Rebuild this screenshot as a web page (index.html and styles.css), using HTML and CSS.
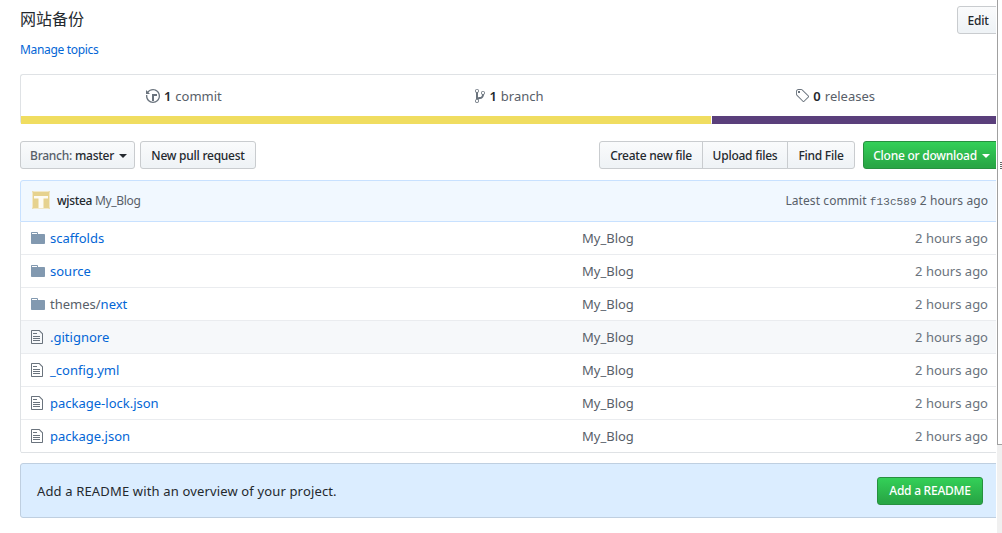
FILE: index.html
```html
<!DOCTYPE html>
<html>

<head>
    <meta charset="utf-8">
    <link rel="stylesheet" href="styles.css">
</head>

<body>

    <div class="page">
        <div class="content">

            <div class="head">
                <div>
                    <div class="description">网站备份</div>
                    <a class="topics">Manage topics</a>
                </div>
                <button class="btn btn-edit">Edit</button>
            </div>

            <div class="summary">
                <div class="stats">
                    <div class="stat">
                        <svg class="icon" width="14" height="16" viewBox="0 0 14 16"><path d="M8 13H6V6h5v2H8v5zM7 1C4.81 1 2.87 2.02 1.59 3.59L0 2v4h4L2.5 4.5C3.55 3.17 5.17 2.3 7 2.3c3.14 0 5.7 2.56 5.7 5.7s-2.56 5.7-5.7 5.7A5.71 5.71 0 0 1 1.3 8c0-.34.03-.67.09-1H.08C.03 7.33 0 7.66 0 8c0 3.86 3.14 7 7 7s7-3.14 7-7-3.14-7-7-7z"/></svg>
                        <b>1</b> commit
                    </div>
                    <div class="stat">
                        <svg class="icon" width="10" height="16" viewBox="0 0 10 16"><path d="M10 5c0-1.11-.89-2-2-2a1.993 1.993 0 0 0-1 3.72v.3c-.02.52-.23.98-.63 1.38-.4.4-.86.61-1.38.63-.83.02-1.48.16-2 .45V4.72a1.993 1.993 0 0 0-1-3.72C.88 1 0 1.89 0 3a2 2 0 0 0 1 1.72v6.56c-.59.35-1 .99-1 1.72 0 1.11.89 2 2 2 1.11 0 2-.89 2-2 0-.53-.2-1-.53-1.36.09-.06.48-.41.59-.47.25-.11.56-.17.94-.17 1.05-.05 1.95-.45 2.75-1.25S8.95 7.77 9 6.73h-.02C9.59 6.37 10 5.73 10 5zM2 1.8c.66 0 1.2.55 1.2 1.2 0 .65-.55 1.2-1.2 1.2C1.35 4.2.8 3.65.8 3c0-.65.55-1.2 1.2-1.2zm0 12.41c-.66 0-1.2-.55-1.2-1.2 0-.65.55-1.2 1.2-1.2.65 0 1.2.55 1.2 1.2 0 .65-.55 1.2-1.2 1.2zm6-8c-.66 0-1.2-.55-1.2-1.2 0-.65.55-1.2 1.2-1.2.65 0 1.2.55 1.2 1.2 0 .65-.55 1.2-1.2 1.2z"/></svg>
                        <b>1</b> branch
                    </div>
                    <div class="stat">
                        <svg class="icon" width="14" height="16" viewBox="0 0 14 16"><path d="M7.73 1.73C7.26 1.26 6.62 1 5.96 1H3.5C2.13 1 1 2.13 1 3.5v2.47c0 .66.27 1.3.73 1.77l6.06 6.06c.39.39 1.02.39 1.41 0l4.59-4.59a.996.996 0 0 0 0-1.41L7.73 1.73zM2.38 7.09c-.31-.3-.47-.7-.47-1.13V3.5c0-.88.72-1.59 1.59-1.59h2.47c.42 0 .83.16 1.13.47l6.14 6.13-4.73 4.73-6.13-6.15zM3.01 3h2v2H3V3h.01z"/></svg>
                        <b>0</b> releases
                    </div>
                </div>
                <div class="langbar">
                    <span class="lang-yellow"></span>
                    <span class="lang-purple"></span>
                </div>
            </div>

            <div class="toolbar">
                <button class="btn btn-branch"><span class="muted">Branch:</span> master <i class="caret"></i></button>
                <button class="btn btn-pull">New pull request</button>
                <div class="spacer"></div>
                <div class="btn-group">
                    <button class="btn btn-create">Create new file</button>
                    <button class="btn btn-upload">Upload files</button>
                    <button class="btn btn-find">Find File</button>
                </div>
                <button class="btn btn-green btn-clone">Clone or download <i class="caret"></i></button>
            </div>

            <div class="commit">
                <svg class="avatar" width="18" height="18" viewBox="0 0 18 18"><rect width="18" height="18" rx="1" fill="#e6d28f"/><path d="M2 5h14v2.500H2zM6.500 7.500h5V18h-5z" fill="#fff" opacity="0.9"/><rect x="0.500" y="0.500" width="17" height="17" rx="1" fill="none" stroke="#f2e8c8"/></svg>
                <b class="author">wjstea</b>
                <span class="commit-msg">My_Blog</span>
                <div class="spacer"></div>
                <span class="commit-info">Latest commit <code>f13c589</code> 2 hours ago</span>
            </div>

            <div class="files">
                <div class="row">
                    <svg class="folder" width="14" height="16" viewBox="0 0 14 16"><path d="M13 4H7V3c0-.66-.31-1-1-1H1c-.55 0-1 .45-1 1v10c0 .55.45 1 1 1h12c.55 0 1-.45 1-1V5c0-.55-.45-1-1-1zM6 4H1V3h5v1z"/></svg>
                    <span class="name"><a>scaffolds</a></span><span class="msg">My_Blog</span><span class="age">2 hours ago</span>
                </div>
                <div class="row">
                    <svg class="folder" width="14" height="16" viewBox="0 0 14 16"><path d="M13 4H7V3c0-.66-.31-1-1-1H1c-.55 0-1 .45-1 1v10c0 .55.45 1 1 1h12c.55 0 1-.45 1-1V5c0-.55-.45-1-1-1zM6 4H1V3h5v1z"/></svg>
                    <span class="name"><a>source</a></span><span class="msg">My_Blog</span><span class="age">2 hours ago</span>
                </div>
                <div class="row">
                    <svg class="folder" width="14" height="16" viewBox="0 0 14 16"><path d="M13 4H7V3c0-.66-.31-1-1-1H1c-.55 0-1 .45-1 1v10c0 .55.45 1 1 1h12c.55 0 1-.45 1-1V5c0-.55-.45-1-1-1zM6 4H1V3h5v1z"/></svg>
                    <span class="name"><span class="muted">themes/</span><a>next</a></span><span class="msg">My_Blog</span><span class="age">2 hours ago</span>
                </div>
                <div class="row row-hover">
                    <svg class="file" width="12" height="16" viewBox="0 0 12 16"><path d="M6 5H2V4h4v1zM2 8h7V7H2v1zm0 2h7V9H2v1zm0 2h7v-1H2v1zm10-7.5V14c0 .55-.45 1-1 1H1c-.55 0-1-.45-1-1V2c0-.55.45-1 1-1h7.5L12 4.500zM11 5L8 2H1v12h10V5z"/></svg>
                    <span class="name"><a>.gitignore</a></span><span class="msg">My_Blog</span><span class="age">2 hours ago</span>
                </div>
                <div class="row">
                    <svg class="file" width="12" height="16" viewBox="0 0 12 16"><path d="M6 5H2V4h4v1zM2 8h7V7H2v1zm0 2h7V9H2v1zm0 2h7v-1H2v1zm10-7.5V14c0 .55-.45 1-1 1H1c-.55 0-1-.45-1-1V2c0-.55.45-1 1-1h7.5L12 4.500zM11 5L8 2H1v12h10V5z"/></svg>
                    <span class="name"><a>_config.yml</a></span><span class="msg">My_Blog</span><span class="age">2 hours ago</span>
                </div>
                <div class="row">
                    <svg class="file" width="12" height="16" viewBox="0 0 12 16"><path d="M6 5H2V4h4v1zM2 8h7V7H2v1zm0 2h7V9H2v1zm0 2h7v-1H2v1zm10-7.5V14c0 .55-.45 1-1 1H1c-.55 0-1-.45-1-1V2c0-.55.45-1 1-1h7.5L12 4.500zM11 5L8 2H1v12h10V5z"/></svg>
                    <span class="name"><a>package-lock.json</a></span><span class="msg">My_Blog</span><span class="age">2 hours ago</span>
                </div>
                <div class="row">
                    <svg class="file" width="12" height="16" viewBox="0 0 12 16"><path d="M6 5H2V4h4v1zM2 8h7V7H2v1zm0 2h7V9H2v1zm0 2h7v-1H2v1zm10-7.5V14c0 .55-.45 1-1 1H1c-.55 0-1-.45-1-1V2c0-.55.45-1 1-1h7.5L12 4.500zM11 5L8 2H1v12h10V5z"/></svg>
                    <span class="name"><a>package.json</a></span><span class="msg">My_Blog</span><span class="age">2 hours ago</span>
                </div>
            </div>

            <div class="readme">
                <span class="readme-text">Add a README with an overview of your project.</span>
                <button class="btn btn-green btn-readme">Add a README</button>
            </div>

        </div>

        <div class="scrollbar">
            <div class="thumb"><span class="grip"></span></div>
        </div>
    </div>

</body>

</html>
```

FILE: styles.css
```css
body {
    margin: 0;
    font-family: "Noto Sans", "Open Sans", "Noto Sans CJK SC", sans-serif;
    font-size: 13px;
    color: #24292e;
    background-color: #fff;
    overflow: hidden;
}

a {
    color: #0366d6;
}

.page {
    display: flex;
    height: 533px;
}

.content {
    width: 976px;
    padding-left: 20px;
    overflow: hidden;
    flex: none;
}

.scrollbar {
    flex: 1;
    margin-left: 1px;
    background-color: #f0f0f0;
}

.thumb {
    position: relative;
    height: 444px;
    background-color: #fff;
    border-left: 1px solid #a0a0a0;
    border-bottom: 1px solid #a0a0a0;
}

.grip {
    position: absolute;
    top: 162px;
    right: 0;
    width: 2px;
    height: 8px;
    background-image: linear-gradient(#666 50%, transparent 50%);
    background-size: 2px 2px;
}

.spacer {
    flex: 1;
}

.muted {
    color: #586069;
}

/* tombol */
.btn {
    font-family: inherit;
    font-size: 12px;
    font-weight: 500;
    letter-spacing: -0.25px;
    color: #24292e;
    height: 28px;
    padding: 0;
    border: 1px solid #c9cccf;
    border-radius: 3px;
    background-image: linear-gradient(-180deg, #fafbfc, #eff3f6 90%);
    white-space: nowrap;
}

.btn-green {
    color: #fff;
    border-color: #27903f;
    background-image: linear-gradient(-180deg, #34d058, #28a745 90%);
}

.caret {
    display: inline-block;
    width: 0;
    height: 0;
    margin-left: 2px;
    vertical-align: 2px;
    border-top: 4px solid currentColor;
    border-left: 4px solid transparent;
    border-right: 4px solid transparent;
}

/* judul */
.head {
    display: flex;
    justify-content: space-between;
    height: 74px;
}

.description {
    font-size: 16px;
    line-height: 24px;
    margin-top: 7px;
}

.topics {
    display: block;
    font-size: 12px;
    line-height: 16px;
    letter-spacing: -0.33px;
    margin-top: 11px;
}

.btn-edit {
    flex: none;
    width: 42px;
    margin: 6px -3px 0 0;
}

/* ringkasan */
.summary {
    width: 980px;
    height: 50px;
    border: 1px solid #dfe2e5;
    border-right: none;
    border-radius: 3px;
    box-sizing: border-box;
}

.stats {
    display: flex;
    width: 977px;
    height: 41px;
}

.stat {
    flex: 1;
    display: flex;
    align-items: center;
    justify-content: center;
    gap: 4px;
    color: #586069;
}

.stat b {
    color: #24292e;
    font-weight: 600;
}

.icon {
    fill: #6a737d;
}

.langbar {
    display: flex;
    height: 8px;
}

.lang-yellow {
    width: 690px;
    margin-right: 1px;
    background-color: #f0dd60;
}

.lang-purple {
    flex: 1;
    background-color: #5a3f7b;
}

/* baris tombol */
.toolbar {
    display: flex;
    width: 980px;
    margin-top: 17px;
}

.btn-branch {
    width: 115px;
    padding-left: 2px;
}

.btn-pull {
    width: 116px;
    margin-left: 5px;
}

.btn-group {
    display: flex;
    margin-right: 8px;
}

.btn-group .btn {
    border-radius: 0;
    margin-left: -1px;
}

.btn-group .btn:first-child {
    border-radius: 3px 0 0 3px;
}

.btn-group .btn:last-child {
    border-radius: 0 3px 3px 0;
}

.btn-create {
    width: 104px;
}

.btn-upload {
    width: 86px;
}

.btn-find {
    width: 68px;
}

.btn-clone {
    width: 137px;
}

/* commit */
.commit {
    display: flex;
    align-items: center;
    width: 980px;
    height: 42px;
    margin-top: 11px;
    padding: 0 11px 2px 11px;
    box-sizing: border-box;
    font-size: 12px;
    color: #586069;
    background-color: #f1f8ff;
    border: 1px solid #c8e1ff;
    border-radius: 3px 0 0 0;
}

.avatar {
    margin-right: 7px;
}

.author {
    color: #24292e;
    font-weight: 500;
    letter-spacing: -0.35px;
    margin-right: 3px;
}

.commit-msg {
    letter-spacing: -0.35px;
}

.commit-info {
    letter-spacing: 0.08px;
}

code {
    font-family: "Liberation Mono", monospace;
    font-size: 11px;
}

/* daftar file */
.files {
    width: 980px;
    border-left: 1px solid #dfe2e5;
    border-radius: 0 0 3px 3px;
    box-sizing: border-box;
}

.row {
    display: flex;
    align-items: center;
    height: 33px;
    padding: 0 12px 0 10px;
    box-sizing: border-box;
    border-bottom: 1px solid #eaecef;
}

.row:last-child {
    border-bottom-color: #dfe2e5;
}

.row-hover {
    background-color: #f6f8fa;
}

.folder {
    fill: #8299b0;
}

.file {
    fill: #6a737d;
    margin: 0 2px 0 0;
}

.name {
    width: 532px;
    margin-left: 5px;
}

.msg {
    color: #586069;
}

.age {
    flex: 1;
    text-align: right;
    color: #6a737d;
}

/* readme */
.readme {
    display: flex;
    align-items: center;
    justify-content: space-between;
    width: 980px;
    height: 55px;
    margin-top: 10px;
    padding: 0 16px;
    box-sizing: border-box;
    background-color: #dbedff;
    border: 1px solid #bfcfe0;
    border-radius: 3px;
}

.readme-text {
    letter-spacing: 0.15px;
}

.btn-readme {
    width: 106px;
}
```
